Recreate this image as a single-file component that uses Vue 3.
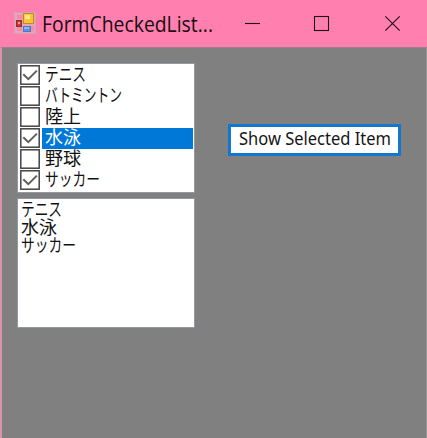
<script setup>
import { ref, computed } from 'vue'

const items = ref([
  { label: 'テニス', width: 41, checked: true },
  { label: 'バトミントン', width: 77, checked: false },
  { label: '陸上', width: 36, checked: false },
  { label: '水泳', width: 36, checked: true },
  { label: '野球', width: 36, checked: false },
  { label: 'サッカー', width: 55, checked: true }
])
const selected = ref(3)
const output = computed(() => items.value.filter((item) => item.checked))

function toggle(item, index) {
  selected.value = index
  item.checked = !item.checked
}
</script>

<template>
  <div class="window">
    <header class="titlebar">
      <svg class="app-icon" width="22" height="22" viewBox="0 0 22 22">
        <rect x=".5" y=".5" width="21" height="21" fill="#eba3b9" stroke="#d6a1b1" />
        <path d="M3 3h6v4H3zM3 15h5v4H3zM17 14h3v5h-3z" fill="#f48aac" />
        <rect x="9.5" y="1.5" width="10" height="10" fill="#f3c536" stroke="#c28c25" />
        <rect x="11" y="3" width="5" height="4" fill="#ffe48a" />
        <rect x="2.5" y="8.5" width="5" height="6" fill="#c23b36" stroke="#98282f" />
        <rect x="4" y="10" width="2" height="2" fill="#ec9c91" />
        <rect x="9.5" y="14.5" width="7" height="5" fill="#5e94e5" stroke="#5279bb" />
        <rect x="10" y="15" width="5" height="2" fill="#8cb7f4" />
      </svg>
      <svg class="title" width="176" height="36">
        <text x="-1" y="27" textLength="171" lengthAdjust="spacingAndGlyphs">FormCheckedList...</text>
      </svg>
      <nav class="controls">
        <svg width="15" height="16"><path d="M0 8.5h15" /></svg>
        <svg width="15" height="16"><rect x=".5" y="1.5" width="14" height="14" /></svg>
        <svg width="15" height="16"><path d="M.3 1.3l14.4 14.4M14.7 1.3L.3 15.7" /></svg>
      </nav>
    </header>
    <main class="client">
      <div class="lists">
        <div class="listbox checked-list">
          <div v-for="(item, i) in items" :key="i" class="row" @click="toggle(item, i)">
            <svg class="check" width="20" height="20">
              <rect x=".8" y=".8" width="18.4" height="18.4" fill="#fff" stroke="#444" stroke-width="1.5" />
              <path v-if="item.checked" d="M3.3 9.2l5 5L16.9 5.6" fill="none" stroke="#606060" stroke-width="2" />
            </svg>
            <div class="label" :class="{ selected: i === selected }">
              <svg width="120" height="21">
                <text x="3" y="15.5" :textLength="item.width" lengthAdjust="spacingAndGlyphs">{{ item.label }}</text>
              </svg>
            </div>
          </div>
        </div>
        <div class="listbox result-list">
          <svg v-for="item in output" :key="item.label" width="120" height="18">
            <text x="0" y="15.5" :textLength="item.width" lengthAdjust="spacingAndGlyphs">{{ item.label }}</text>
          </svg>
        </div>
      </div>
      <button class="show" type="button">
        <svg width="153" height="26">
          <text x="0" y="18" textLength="152" lengthAdjust="spacingAndGlyphs">Show Selected Item</text>
        </svg>
      </button>
    </main>
  </div>
</template>

<style>
body {
  margin: 0;
  overflow: hidden;
}
</style>

<style scoped>
.window {
  box-sizing: border-box;
  width: 427px;
  height: 438px;
  display: flex;
  flex-direction: column;
  background: #ff80ae;
  font-family: "Noto Sans CJK JP", sans-serif;
}
svg {
  display: block;
  flex: none;
  overflow: visible;
}
.titlebar {
  box-sizing: border-box;
  height: 47px;
  flex: none;
  display: flex;
  align-items: flex-start;
  padding: 5px 0 0 14px;
}
.app-icon {
  margin-top: 7px;
}
.title {
  margin-left: 7px;
  font: 21px "Open Sans", "Noto Sans", sans-serif;
  fill: #1b0b12;
}
.controls {
  display: flex;
  gap: 54px;
  margin: 10px 0 0 26px;
  fill: none;
  stroke: #210c15;
  stroke-width: 1.1;
}
.controls svg:last-child {
  margin-left: 2px;
}
.client {
  box-sizing: border-box;
  flex: 1;
  display: flex;
  align-items: flex-start;
  padding: 16px 0 0 15px;
  background: #808080;
  border-top: 1px solid #9c7f89;
  border-right: 1px solid #969696;
  border-left: 2px solid #dc93aa;
}
.lists {
  display: flex;
  flex-direction: column;
  gap: 5px;
  margin-top: -1px;
}
.listbox {
  box-sizing: border-box;
  width: 178px;
  height: 130px;
  background: #fff;
  border: 1px solid #9299a2;
  font-size: 18px;
  fill: #111;
}
.checked-list {
  padding: 1px 1px 0 2px;
}
.row {
  display: flex;
  height: 21px;
}
.label {
  flex: 1;
  margin-left: 2px;
}
.selected {
  background: #0078d7;
  fill: #fff;
}
.result-list {
  padding: 1px 0 0 3px;
}
.show {
  box-sizing: border-box;
  width: 173px;
  height: 32px;
  margin: 60px 0 0 33px;
  padding: 0 0 0 8px;
  display: flex;
  background: #fff;
  border: 3px solid #1477cd;
  font: 18px "Noto Sans", sans-serif;
  fill: #151515;
}
</style>
